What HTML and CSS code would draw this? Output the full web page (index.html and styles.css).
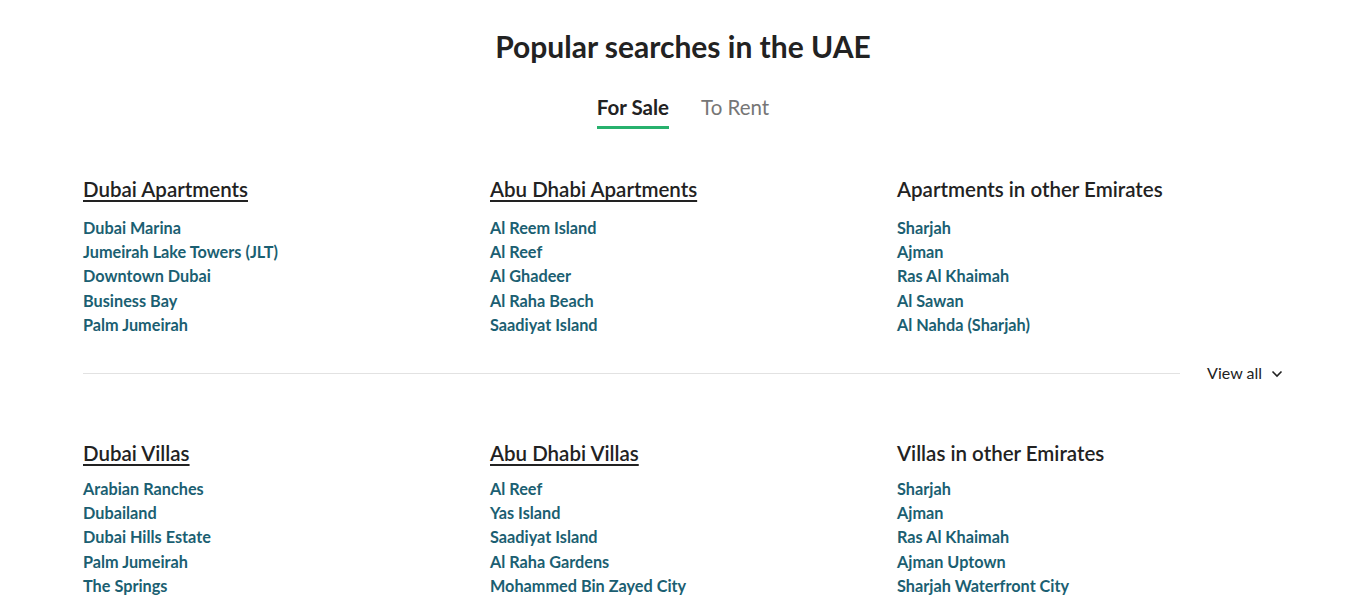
FILE: index.html
```html
<!DOCTYPE html>
<html>
<head>
<meta charset="utf-8">
<link rel="stylesheet" href="styles.css">
</head>
<body>
<main class="page">
  <h1 class="title">Popular searches in the UAE</h1>
  <nav class="tabs">
    <span class="tab active">For Sale</span>
    <span class="tab">To Rent</span>
  </nav>

  <section class="group">
    <div class="cols">
      <div class="col">
        <a class="head linked">Dubai Apartments</a>
        <ul class="links">
          <li>Dubai Marina</li>
          <li>Jumeirah Lake Towers (JLT)</li>
          <li>Downtown Dubai</li>
          <li>Business Bay</li>
          <li>Palm Jumeirah</li>
        </ul>
      </div>
      <div class="col">
        <a class="head linked">Abu Dhabi Apartments</a>
        <ul class="links">
          <li>Al Reem Island</li>
          <li>Al Reef</li>
          <li>Al Ghadeer</li>
          <li>Al Raha Beach</li>
          <li>Saadiyat Island</li>
        </ul>
      </div>
      <div class="col">
        <span class="head">Apartments in other Emirates</span>
        <ul class="links">
          <li>Sharjah</li>
          <li>Ajman</li>
          <li>Ras Al Khaimah</li>
          <li>Al Sawan</li>
          <li>Al Nahda (Sharjah)</li>
        </ul>
      </div>
    </div>
    <div class="viewall">
      <hr class="rule">
      <span class="va-text">View all</span>
      <svg class="chev" width="12" height="8" viewBox="0 0 12 8"><path d="M1.5 1.5 L6 6 L10.5 1.5" fill="none" stroke="#222" stroke-width="1.6"/></svg>
    </div>
  </section>

  <section class="group second">
    <div class="cols">
      <div class="col">
        <a class="head linked">Dubai Villas</a>
        <ul class="links">
          <li>Arabian Ranches</li>
          <li>Dubailand</li>
          <li>Dubai Hills Estate</li>
          <li>Palm Jumeirah</li>
          <li>The Springs</li>
        </ul>
      </div>
      <div class="col">
        <a class="head linked">Abu Dhabi Villas</a>
        <ul class="links">
          <li>Al Reef</li>
          <li>Yas Island</li>
          <li>Saadiyat Island</li>
          <li>Al Raha Gardens</li>
          <li>Mohammed Bin Zayed City</li>
        </ul>
      </div>
      <div class="col">
        <span class="head">Villas in other Emirates</span>
        <ul class="links">
          <li>Sharjah</li>
          <li>Ajman</li>
          <li>Ras Al Khaimah</li>
          <li>Ajman Uptown</li>
          <li>Sharjah Waterfront City</li>
        </ul>
      </div>
    </div>
  </section>
</main>
</body>
</html>
```

FILE: styles.css
```css
* { box-sizing: border-box; }
html, body { margin: 0; padding: 0; background: #fff; }
body {
  font-family: Lato, "Open Sans", sans-serif;
  color: #222;
  overflow: hidden;
}
.page {
  width: 1200px;
  margin: 0 auto;
  padding-top: 28px;
}
.title {
  margin: 0;
  text-align: center;
  font-size: 30px;
  font-weight: 700;
  line-height: 36px;
  color: #222;
}
.tabs {
  display: flex;
  justify-content: center;
  gap: 32px;
  margin-top: 31px;
}
.tab {
  font-size: 20.5px;
  line-height: 24px;
  padding-bottom: 7px;
  color: #767676;
  border-bottom: 3px solid transparent;
}
.tab.active {
  color: #222;
  font-weight: 700;
  border-bottom-color: #28b16d;
}
.group { margin-top: 48px; }
.group.second { margin-top: 56px; }
.cols {
  display: grid;
  grid-template-columns: 407px 407px 386px;
}
.col { display: flex; flex-direction: column; }
.head {
  font-size: 20.5px;
  font-weight: 600;
  line-height: 24px;
  color: #222;
  align-self: flex-start;
}
.head.linked { text-decoration: underline; text-underline-offset: 3px; text-decoration-thickness: 2px; }
.links {
  list-style: none;
  margin: 15px 0 0;
  padding: 0;
}
.second .links { margin-top: 12px; }
.links li {
  font-size: 16.25px;
  font-weight: 700;
  line-height: 24.2px;
  color: #1b5f72;
}
.viewall {
  display: flex;
  align-items: center;
  margin-top: 24px;
  height: 24px;
}
.rule {
  flex: 1;
  margin: 0 27px 0 0;
  border: 0;
  border-top: 1px solid #e2e2e2;
}
.va-text {
  font-size: 16px;
  line-height: 24px;
  color: #222;
}
.chev { margin-left: 9px; margin-top: 2px; }
```
